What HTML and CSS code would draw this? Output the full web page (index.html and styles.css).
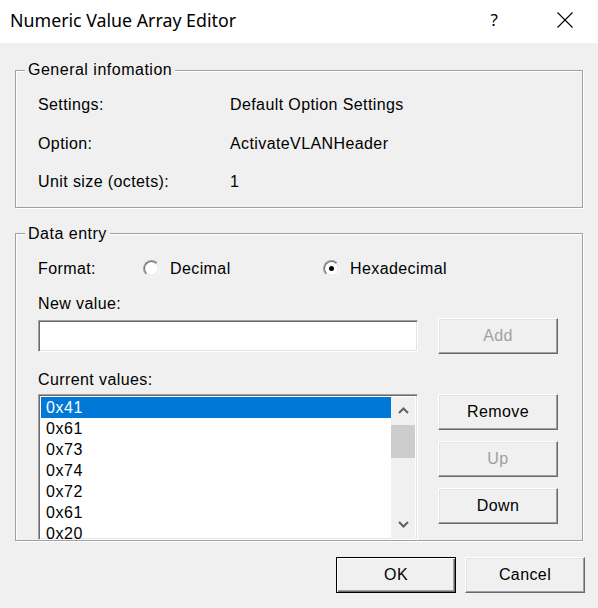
FILE: index.html
```html
<!DOCTYPE html>
<html>
<head>
<meta charset="utf-8">
<title>Numeric Value Array Editor</title>
<link rel="stylesheet" href="styles.css">
</head>
<body>
<div class="titlebar">
  <span class="title">Numeric Value Array Editor</span>
  <span class="help">?</span>
  <svg class="close" width="16" height="16" viewBox="0 0 16 16"><path d="M0.5 0.5 L15.5 15.5 M15.5 0.5 L0.5 15.5" stroke="#000" stroke-width="1.1" fill="none"/></svg>
</div>
<div class="content">
  <fieldset class="group g1">
    <legend>General infomation</legend>
    <div class="info-grid">
      <div class="cell">Settings:</div><div class="cell">Default Option Settings</div>
      <div class="cell">Option:</div><div class="cell">ActivateVLANHeader</div>
      <div class="cell">Unit size (octets):</div><div class="cell">1</div>
    </div>
  </fieldset>
  <fieldset class="group g2">
    <legend>Data entry</legend>
    <div class="format-row">
      <span class="format-label">Format:</span>
      <span class="radio-opt dec"><span class="radio"><span class="radio-in"></span></span><span>Decimal</span></span>
      <span class="radio-opt hex"><span class="radio"><span class="radio-in"><span class="dot"></span></span></span><span>Hexadecimal</span></span>
    </div>
    <div class="label lbl-new">New value:</div>
    <div class="entry-row">
      <div class="textbox"></div>
      <button class="btn disabled">Add</button>
    </div>
    <div class="label lbl-cur">Current values:</div>
    <div class="list-row">
      <div class="listbox">
        <div class="items">
          <div class="item selected">0x41</div>
          <div class="item">0x61</div>
          <div class="item">0x73</div>
          <div class="item">0x74</div>
          <div class="item">0x72</div>
          <div class="item">0x61</div>
          <div class="item">0x20</div>
        </div>
        <div class="scrollbar">
          <div class="arrow"><svg width="11" height="7" viewBox="0 0 11 7"><path d="M1 6 L5.5 1.5 L10 6" stroke="#606060" stroke-width="2" fill="none"/></svg></div>
          <div class="track"><div class="thumb"></div></div>
          <div class="arrow"><svg width="11" height="7" viewBox="0 0 11 7"><path d="M1 1 L5.5 5.5 L10 1" stroke="#606060" stroke-width="2" fill="none"/></svg></div>
        </div>
      </div>
      <div class="btn-col">
        <button class="btn">Remove</button>
        <button class="btn disabled">Up</button>
        <button class="btn">Down</button>
      </div>
    </div>
  </fieldset>
  <div class="footer">
    <button class="btn default">OK</button>
    <button class="btn">Cancel</button>
  </div>
</div>
</body>
</html>
```
FILE: styles.css
```css
html, body {
  margin: 0;
  padding: 0;
}
body {
  width: 598px;
  height: 608px;
  background: #f0f0f0;
  font-family: "Liberation Sans", Arial, sans-serif;
  font-size: 16px;
  letter-spacing: 0.4px;
  color: #000;
  overflow: hidden;
}
.titlebar {
  height: 43px;
  background: #fff;
  display: flex;
  align-items: center;
  padding-bottom: 4px;
  box-sizing: border-box;
}
.title {
  flex: 1;
  padding-left: 10px;
  font-family: "Noto Sans", sans-serif;
  font-size: 17.8px;
  letter-spacing: 0;
}
.help {
  font-family: "Noto Sans", sans-serif;
  font-size: 17px;
  letter-spacing: 0;
  margin-right: 59px;
}
.close {
  margin-right: 25px;
  display: block;
}
.content {
  display: flex;
  flex-direction: column;
}
.group {
  margin: 0 15px;
  padding: 0 24px 0 22px;
  border: 1px solid #a0a0a0;
  box-shadow: inset 1px 1px 0 #fff, 1px 1px 0 #fff;
  min-inline-size: 0;
}
.group legend {
  margin-left: -13px;
  padding: 0 3px;
  line-height: 18px;
  background: #f0f0f0;
  letter-spacing: 0.5px;
}
.g1 {
  margin-top: 18px;
  padding-top: 7px;
  padding-bottom: 5px;
}
.info-grid {
  display: grid;
  grid-template-columns: 192px 1fr;
  grid-auto-rows: 38.5px;
  align-items: center;
}
.g2 {
  margin-top: 17px;
  padding-top: 13px;
  padding-bottom: 0;
}
.format-row {
  display: flex;
  align-items: center;
  height: 26px;
}
.format-label {
  width: 105px;
}
.radio-opt {
  display: flex;
  align-items: center;
}
.radio-opt.dec {
  width: 180px;
}
.radio {
  width: 17px;
  height: 17px;
  box-sizing: border-box;
  border-radius: 50%;
  border: 1px solid;
  border-color: #a0a0a0 #fff #fff #a0a0a0;
  margin-right: 10px;
  display: flex;
}
.radio-in {
  flex: 1;
  border-radius: 50%;
  border: 1px solid;
  border-color: #696969 #e3e3e3 #e3e3e3 #696969;
  background: #fff;
  display: flex;
  align-items: center;
  justify-content: center;
}
.dot {
  width: 5px;
  height: 5px;
  border-radius: 50%;
  background: #000;
}
.label {
  line-height: 18px;
}
.lbl-new {
  margin-top: 13px;
}
.lbl-cur {
  margin-top: 17px;
}
.entry-row {
  margin-top: 5px;
  display: flex;
  align-items: center;
  gap: 20px;
  height: 36px;
}
.textbox {
  width: 380px;
  height: 32px;
  box-sizing: border-box;
  background: #fff;
  border: 1px solid;
  border-color: #a0a0a0 #fff #fff #a0a0a0;
  box-shadow: inset 1px 1px 0 #696969, inset -1px -1px 0 #e3e3e3;
}
.btn {
  width: 120px;
  height: 36px;
  box-sizing: border-box;
  background: #f0f0f0;
  border: 1px solid;
  border-color: #fff #696969 #696969 #fff;
  box-shadow: inset -1px -1px 0 #a0a0a0, inset 1px 1px 0 #e3e3e3;
  font-family: "Liberation Sans", Arial, sans-serif;
  font-size: 16px;
  letter-spacing: 0.4px;
  color: #000;
  padding: 0;
  margin: 0;
}
.btn.disabled {
  color: #a0a0a0;
}
.btn.default {
  border: 1px solid #000;
  box-shadow: inset 1px 1px 0 #fff, inset -1px -1px 0 #696969, inset -2px -2px 0 #a0a0a0;
}
.list-row {
  margin-top: 5px;
  display: flex;
  gap: 20px;
}
.listbox {
  width: 380px;
  height: 146px;
  box-sizing: border-box;
  background: #fff;
  border: 1px solid;
  border-color: #a0a0a0 #fff #fff #a0a0a0;
  box-shadow: inset 1px 1px 0 #696969, inset -1px -1px 0 #e3e3e3;
  padding: 2px 2px 0 2px;
  display: flex;
  overflow: hidden;
}
.items {
  flex: 1;
}
.item {
  height: 21px;
  line-height: 21px;
  padding-left: 5px;
  letter-spacing: 0.6px;
}
.item.selected {
  background: #0078d7;
  color: #fff;
}
.scrollbar {
  width: 24px;
  display: flex;
  flex-direction: column;
  background: #f0f0f0;
}
.arrow {
  height: 28px;
  display: flex;
  align-items: center;
  justify-content: center;
}
.track {
  flex: 1;
}
.thumb {
  height: 33px;
  background: #cdcdcd;
}
.btn-col {
  display: flex;
  flex-direction: column;
  gap: 11px;
}
.footer {
  margin-top: 16px;
  display: flex;
  justify-content: flex-end;
  gap: 9px;
  padding-right: 13px;
}
```
